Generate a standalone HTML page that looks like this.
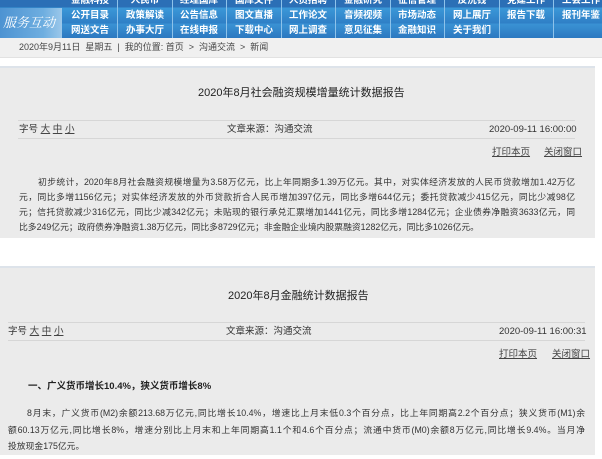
<!DOCTYPE html>
<html><head><meta charset="utf-8">
<style>
*{margin:0;padding:0;box-sizing:border-box}
body{width:602px;height:459px;overflow:hidden;background:#fff;font-family:"Liberation Sans","Noto Sans CJK SC","WenQuanYi Zen Hei",sans-serif;color:#333;font-size:9.5px;position:relative}
.abs{position:absolute;white-space:nowrap;line-height:13px}
#nav{position:absolute;left:0;top:0;width:602px;height:38px;background:linear-gradient(#2b6fb6 0,#2b6fb6 7px,#3b98d8 8px,#2f7fc6 23px,#3a92d4 24px,#2c78c0 38px)}
#lab{position:absolute;left:0;top:8px;width:62px;height:30px;background:linear-gradient(90deg,#4d93d2,#6eaee0 70%,#9cc8ea);color:#fff;font-style:italic;font-size:13px;font-family:"Liberation Serif","Noto Serif CJK SC",serif;line-height:30px;padding-left:3px}
.sep{position:absolute;width:1px;background:#8dc2ea;top:0;height:38px}
.ni{position:absolute;color:#fff;font-size:9.5px;font-weight:bold;width:54px;text-align:center;line-height:14px}
#bc{position:absolute;left:0;top:38px;width:602px;height:20px;background:#f0f0f0;border-bottom:1px solid #e2e2e2;font-size:9px;color:#444;line-height:19px;padding-left:19px}
.panel{position:absolute;left:0;width:595px;background:#ebebeb;border-top:2px solid #dde3ea}
.hl{position:absolute;height:1px;background:#d6d6d6}
.t{font-size:11px;color:#222;line-height:14px}
.u{text-decoration:underline;color:#444}
.ln{position:absolute;font-size:8.8px;line-height:13px;color:#333;white-space:nowrap;overflow:hidden;text-align:justify;text-align-last:justify}
</style></head><body>
<div id="nav">
<div id="lab">服务互动</div>
<div class="ni" style="left:63px;top:-6px">金融科技</div><div class="ni" style="left:118px;top:-6px">人民币</div><div class="ni" style="left:172px;top:-6px">经理国库</div><div class="ni" style="left:227px;top:-6px">国库文件</div><div class="ni" style="left:281px;top:-6px">人员招聘</div><div class="ni" style="left:336px;top:-6px">金融研究</div><div class="ni" style="left:390px;top:-6px">征信管理</div><div class="ni" style="left:445px;top:-6px">反洗钱</div><div class="ni" style="left:499px;top:-6px">党建工作</div><div class="ni" style="left:554px;top:-6px">工会工作</div>
<div class="ni" style="left:63px;top:9px">公开目录</div><div class="ni" style="left:118px;top:9px">政策解读</div><div class="ni" style="left:172px;top:9px">公告信息</div><div class="ni" style="left:227px;top:9px">图文直播</div><div class="ni" style="left:281px;top:9px">工作论文</div><div class="ni" style="left:336px;top:9px">音频视频</div><div class="ni" style="left:390px;top:9px">市场动态</div><div class="ni" style="left:445px;top:9px">网上展厅</div><div class="ni" style="left:499px;top:9px">报告下载</div><div class="ni" style="left:554px;top:9px">报刊年鉴</div>
<div class="ni" style="left:63px;top:24px">网送文告</div><div class="ni" style="left:118px;top:24px">办事大厅</div><div class="ni" style="left:172px;top:24px">在线申报</div><div class="ni" style="left:227px;top:24px">下载中心</div><div class="ni" style="left:281px;top:24px">网上调查</div><div class="ni" style="left:336px;top:24px">意见征集</div><div class="ni" style="left:390px;top:24px">金融知识</div><div class="ni" style="left:445px;top:24px">关于我们</div>
<div class="sep" style="left:117px"></div><div class="sep" style="left:172px"></div><div class="sep" style="left:226px"></div><div class="sep" style="left:281px"></div><div class="sep" style="left:335px"></div><div class="sep" style="left:390px"></div><div class="sep" style="left:444px"></div><div class="sep" style="left:499px"></div><div class="sep" style="left:553px"></div>
</div>
<div id="bc">2020年9月11日 &nbsp;星期五 &nbsp;| &nbsp;我的位置: 首页 &nbsp;&gt; &nbsp;沟通交流 &nbsp;&gt; &nbsp;新闻</div>

<div class="panel" style="top:66px;height:172px"></div>
<div class="abs t" style="left:198px;top:86px">2020年8月社会融资规模增量统计数据报告</div>
<div class="hl" style="left:18px;width:557px;top:120px"></div>
<div class="hl" style="left:18px;width:557px;top:138px"></div>
<div class="abs" style="left:19px;top:123px">字号 <span class="u">大</span> <span class="u">中</span> <span class="u">小</span></div>
<div class="abs" style="left:227px;top:123px">文章来源：沟通交流</div>
<div class="abs" style="left:489px;top:123px">2020-09-11 16:00:00</div>
<div class="abs u" style="left:492px;top:146px">打印本页</div>
<div class="abs u" style="left:544px;top:146px">关闭窗口</div>
<div class="ln" style="left:38px;width:537px;top:176px">初步统计，2020年8月社会融资规模增量为3.58万亿元，比上年同期多1.39万亿元。其中，对实体经济发放的人民币贷款增加1.42万亿</div>
<div class="ln" style="left:19px;width:556px;top:191px">元，同比多增1156亿元；对实体经济发放的外币贷款折合人民币增加397亿元，同比多增644亿元；委托贷款减少415亿元，同比少减98亿</div>
<div class="ln" style="left:19px;width:556px;top:206px">元；信托贷款减少316亿元，同比少减342亿元；未贴现的银行承兑汇票增加1441亿元，同比多增1284亿元；企业债券净融资3633亿元，同</div>
<div class="abs" style="left:19px;top:221px;font-size:8.8px">比多249亿元；政府债券净融资1.38万亿元，同比多8729亿元；非金融企业境内股票融资1282亿元，同比多1026亿元。</div>

<div class="panel" style="top:266px;height:189px"></div>
<div class="abs t" style="left:228px;top:289px">2020年8月金融统计数据报告</div>
<div class="hl" style="left:8px;width:577px;top:322px"></div>
<div class="hl" style="left:8px;width:577px;top:340px"></div>
<div class="abs" style="left:8px;top:325px">字号 <span class="u">大</span> <span class="u">中</span> <span class="u">小</span></div>
<div class="abs" style="left:226px;top:325px">文章来源：沟通交流</div>
<div class="abs" style="left:499px;top:325px">2020-09-11 16:00:31</div>
<div class="abs u" style="left:499px;top:348px">打印本页</div>
<div class="abs u" style="left:552px;top:348px">关闭窗口</div>
<div class="abs" style="left:28px;top:380px;font-weight:bold;font-size:9.5px;color:#222">一、广义货币增长10.4%，狭义货币增长8%</div>
<div class="ln" style="left:27px;width:558px;top:407px">8月末，广义货币(M2)余额213.68万亿元,同比增长10.4%，增速比上月末低0.3个百分点，比上年同期高2.2个百分点；狭义货币(M1)余</div>
<div class="ln" style="left:8px;width:577px;top:424px">额60.13万亿元,同比增长8%，增速分别比上月末和上年同期高1.1个和4.6个百分点；流通中货币(M0)余额8万亿元,同比增长9.4%。当月净</div>
<div class="abs" style="left:8px;top:440px;font-size:8.8px">投放现金175亿元。</div>
</body></html>
